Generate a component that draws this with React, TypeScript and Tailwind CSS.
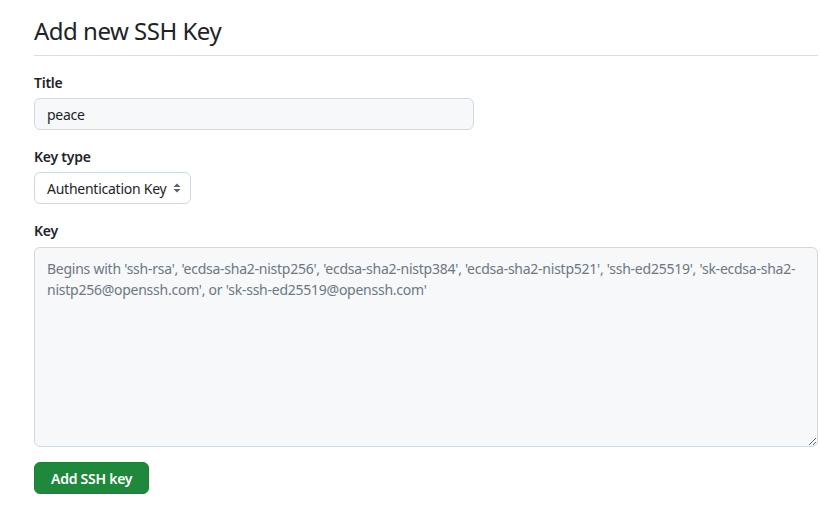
import { useState } from 'react';

const PLACEHOLDER =
  "Begins with 'ssh-rsa', 'ecdsa-sha2-nistp256', 'ecdsa-sha2-nistp384', 'ecdsa-sha2-nistp521', 'ssh-ed25519', 'sk-ecdsa-sha2-nistp256@openssh.com', or 'sk-ssh-ed25519@openssh.com'";

function SelectArrows() {
  return (
    <svg width="8" height="12" viewBox="0 0 8 12" className="text-[#59636e]">
      <path d="M4 1.5 7.5 5h-7z" fill="currentColor" />
      <path d="M4 10.5 7.5 7h-7z" fill="currentColor" />
    </svg>
  );
}

export default function App() {
  const [title, setTitle] = useState('peace');
  const [key, setKey] = useState('');

  return (
    <div className="min-h-[516px] bg-white pl-[34px] pr-[2px] pt-[15px] text-[#1f2328] tracking-[-0.25px] font-['Noto_Sans','Open_Sans',sans-serif]">
      {/* Header */}
      <div className="border-b border-[#d8dee4] pb-[8px]">
        <h1 className="text-[24px] leading-[32px] font-normal tracking-[-0.5px]">Add new SSH Key</h1>
      </div>

      <form className="pt-[17px]" onSubmit={(e) => e.preventDefault()}>
        {/* Title */}
        <div className="mb-[17px]">
          <label className="block text-[14px] leading-[20px] font-semibold mb-[5px]">Title</label>
          <input
            value={title}
            onChange={(e) => setTitle(e.target.value)}
            className="block w-[440px] h-[32px] px-[12px] text-[14px] tracking-[-0.25px] bg-[#f6f8fa] border border-[#d1d9e0] rounded-[6px] outline-none"
          />
        </div>

        {/* Key type */}
        <div className="mb-[17px]">
          <label className="block text-[14px] leading-[20px] font-semibold mb-[5px]">Key type</label>
          <div className="flex">
            <div className="flex items-center gap-[7px] h-[32px] pl-[12px] pr-[9px] text-[14px] bg-white border border-[#d1d9e0] rounded-[6px]">
              <span>Authentication Key</span>
              <SelectArrows />
            </div>
          </div>
        </div>

        {/* Key */}
        <div className="mb-[15px]">
          <label className="block text-[14px] leading-[20px] font-semibold mb-[6px]">Key</label>
          <textarea
            value={key}
            onChange={(e) => setKey(e.target.value)}
            placeholder={PLACEHOLDER}
            className="block w-full h-[200px] px-[12px] py-[10px] text-[14px] leading-[21px] tracking-[-0.25px] bg-[#f6f8fa] border border-[#d1d9e0] rounded-[6px] outline-none placeholder:text-[#6e7781]"
          />
        </div>

        <button
          type="submit"
          className="h-[32px] px-[16px] text-[14px] font-semibold tracking-[-0.25px] text-white bg-[#1f883d] border border-[#1a7f37] rounded-[6px]"
        >
          Add SSH key
        </button>
      </form>
    </div>
  );
}
